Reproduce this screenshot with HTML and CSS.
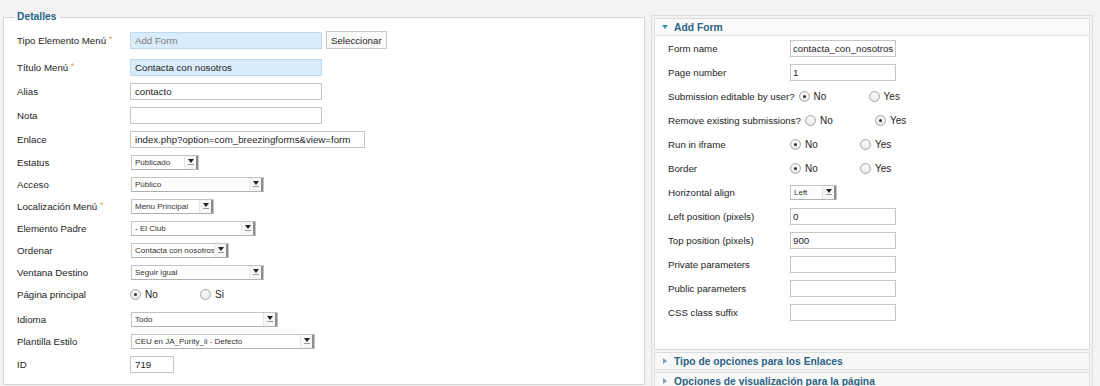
FILE: index.html
```html
<!DOCTYPE html>
<html lang="es">
<head>
    <meta charset="UTF-8">
    <meta name="viewport" content="width=device-width, initial-scale=1.0">
    <title>Editar elemento de menú</title>
    <link rel="stylesheet" href="styles.css">
</head>
<body>
    <div class="page">
        <fieldset class="details">
            <legend>Detalles</legend>
            <div class="row first">
                <label>Tipo Elemento Menú <span class="star">*</span></label>
                <input class="field blue muted" type="text" value="Add Form" readonly>
                <button class="pick">Seleccionar</button>
            </div>
            <div class="row">
                <label>Título Menú <span class="star">*</span></label>
                <input class="field blue" type="text" value="Contacta con nosotros">
            </div>
            <div class="row">
                <label>Alias</label>
                <input class="field" type="text" value="contacto">
            </div>
            <div class="row">
                <label>Nota</label>
                <input class="field" type="text" value="">
            </div>
            <div class="row">
                <label>Enlace</label>
                <input class="field long" type="text" value="index.php?option=com_breezingforms&amp;view=form" readonly>
            </div>
            <div class="row sel">
                <label>Estatus</label>
                <div class="select s-status"><span class="val">Publicado</span><span class="arrow"></span></div>
            </div>
            <div class="row sel">
                <label>Acceso</label>
                <div class="select s-access"><span class="val">Público</span><span class="arrow"></span></div>
            </div>
            <div class="row sel">
                <label>Localización Menú <span class="star">*</span></label>
                <div class="select s-menu"><span class="val">Menu Principal</span><span class="arrow"></span></div>
            </div>
            <div class="row sel">
                <label>Elemento Padre</label>
                <div class="select s-parent"><span class="val">- El Club</span><span class="arrow"></span></div>
            </div>
            <div class="row sel">
                <label>Ordenar</label>
                <div class="select s-order"><span class="val">Contacta con nosotros</span><span class="arrow"></span></div>
            </div>
            <div class="row sel">
                <label>Ventana Destino</label>
                <div class="select s-access"><span class="val">Seguir igual</span><span class="arrow"></span></div>
            </div>
            <div class="row sel radios">
                <label>Página principal</label>
                <span class="radio on"><i></i>No</span>
                <span class="radio"><i></i>Si</span>
            </div>
            <div class="row sel">
                <label>Idioma</label>
                <div class="select s-lang"><span class="val">Todo</span><span class="arrow"></span></div>
            </div>
            <div class="row sel">
                <label>Plantilla Estilo</label>
                <div class="select s-tpl"><span class="val">CEU en JA_Purity_ii - Defecto</span><span class="arrow"></span></div>
            </div>
            <div class="row">
                <label>ID</label>
                <input class="field short" type="text" value="719" readonly>
            </div>
        </fieldset>

        <div class="side">
            <div class="pane open">
                <h3 class="pane-title"><span class="tri"></span>Add Form</h3>
                <div class="pane-body">
                    <div class="row">
                        <label>Form name</label>
                        <input class="field" type="text" value="contacta_con_nosotros">
                    </div>
                    <div class="row">
                        <label>Page number</label>
                        <input class="field" type="text" value="1">
                    </div>
                    <div class="row">
                        <label>Submission editable by user?</label>
                        <span class="radio on"><i></i>No</span>
                        <span class="radio"><i></i>Yes</span>
                    </div>
                    <div class="row">
                        <label>Remove existing submissions?</label>
                        <span class="radio"><i></i>No</span>
                        <span class="radio on"><i></i>Yes</span>
                    </div>
                    <div class="row">
                        <label>Run in iframe</label>
                        <span class="radio on"><i></i>No</span>
                        <span class="radio"><i></i>Yes</span>
                    </div>
                    <div class="row">
                        <label>Border</label>
                        <span class="radio on"><i></i>No</span>
                        <span class="radio"><i></i>Yes</span>
                    </div>
                    <div class="row">
                        <label>Horizontal align</label>
                        <div class="select s-align"><span class="val">Left</span><span class="arrow"></span></div>
                    </div>
                    <div class="row">
                        <label>Left position (pixels)</label>
                        <input class="field" type="text" value="0">
                    </div>
                    <div class="row">
                        <label>Top position (pixels)</label>
                        <input class="field" type="text" value="900">
                    </div>
                    <div class="row">
                        <label>Private parameters</label>
                        <input class="field" type="text" value="">
                    </div>
                    <div class="row">
                        <label>Public parameters</label>
                        <input class="field" type="text" value="">
                    </div>
                    <div class="row">
                        <label>CSS class suffix</label>
                        <input class="field" type="text" value="">
                    </div>
                </div>
            </div>
            <div class="pane">
                <h3 class="pane-title"><span class="tri closed"></span>Tipo de opciones para los Enlaces</h3>
            </div>
            <div class="pane">
                <h3 class="pane-title"><span class="tri closed"></span>Opciones de visualización para la página</h3>
            </div>
        </div>
    </div>
</body>
</html>
```

FILE: styles.css
```css
body {
    margin: 0;
    background-color: #f3f3f3;
    font-family: "Liberation Sans", Arial, sans-serif;
    font-size: 9.7px;
    color: #1e1e1e;
}

.page {
    display: flex;
    align-items: flex-start;
    gap: 6px;
    padding: 10px 0 0 3px;
}

/* left column */
.details {
    width: 642px;
    min-width: 0;
    box-sizing: border-box;
    margin: 0;
    padding: 4px 0 8px 13px;
    border: 1px solid #d6d6d6;
    background-color: #ffffff;
}

.details legend {
    padding: 0 2px;
    margin-left: -2px;
    font-size: 10.3px;
    line-height: 14px;
    font-weight: bold;
    color: #2a6386;
}

.row {
    display: flex;
    align-items: center;
    height: 24px;
}

.row.sel {
    height: 22px;
}

.row.first,
.row.radios {
    margin-bottom: 3px;
}

.row label {
    width: 113px;
    flex: none;
}

.star {
    color: #eba345;
    font-size: 9px;
    position: relative;
    top: -2px;
}

.field {
    box-sizing: border-box;
    width: 192px;
    height: 17px;
    margin: 0;
    padding: 0 4px;
    border: 1px solid #c6c6c6;
    background-color: #ffffff;
    font-family: inherit;
    font-size: 9.7px;
    color: #1e1e1e;
    outline: none;
}

.field.blue {
    background-color: #d9ecfb;
    border-color: #c2d8ea;
}

.field.muted {
    color: #7d7d7d;
}

.field.long {
    width: 235px;
}

.field.short {
    width: 44px;
}

.pick {
    margin-left: 4px;
    height: 18px;
    padding: 0 4px;
    border: 1px solid #c9c9c9;
    background-color: #fafafa;
    font-family: inherit;
    font-size: 9.7px;
    color: #1e1e1e;
}

/* fake selects */
.select {
    display: inline-flex;
    align-items: stretch;
    box-sizing: border-box;
    height: 15px;
    margin-left: 1px;
    border: 1px solid #c4c4c4;
    border-bottom-color: #b0b0b0;
    background-color: #ffffff;
    font-size: 8px;
    color: #333333;
}

.select .val {
    flex: 1;
    padding-left: 3px;
    line-height: 13px;
    white-space: nowrap;
    overflow: hidden;
}

.select .arrow {
    width: 11px;
    flex: none;
    display: flex;
    flex-direction: column;
    align-items: center;
    justify-content: center;
    gap: 1px;
    border-left: 1px solid #e6e6e6;
    border-right: 2px solid #8c8c8c;
    background-color: #f7f7f7;
}

.select .arrow::before {
    content: "";
    border-left: 3px solid transparent;
    border-right: 3px solid transparent;
    border-top: 4px solid #222222;
}

.select .arrow::after {
    content: "";
    width: 6px;
    height: 1px;
    background-color: #9a9a9a;
}

.s-status { width: 68px; }
.s-access { width: 133px; }
.s-menu { width: 83px; }
.s-parent { width: 125px; }
.s-order { width: 98px; }
.s-lang { width: 147px; }
.s-tpl { width: 184px; }
.s-align { width: 47px; margin-left: 0; }

/* radios */
.radio {
    display: inline-flex;
    align-items: center;
    gap: 4px;
    width: 70px;
    flex: none;
    font-size: 10px;
}

.radio i {
    display: flex;
    align-items: center;
    justify-content: center;
    width: 9px;
    height: 9px;
    border: 1px solid #a8a8a8;
    border-radius: 50%;
    background: linear-gradient(#ffffff, #e6e6e6);
    box-shadow: inset 0 1px 1px rgba(0, 0, 0, 0.08);
}

.radio.on i::after {
    content: "";
    width: 3px;
    height: 3px;
    border-radius: 50%;
    background-color: #333333;
}

/* right column */
.side {
    width: 442px;
    box-sizing: border-box;
    margin-top: 5px;
    padding: 2px;
    border: 1px solid #dcdcdc;
    background-color: #f3f3f3;
}

.pane {
    margin-bottom: 2px;
    border: 1px solid #dcdcdc;
    background-color: #ffffff;
}

.pane-title {
    display: flex;
    align-items: center;
    gap: 6px;
    height: 16px;
    margin: 0;
    padding-left: 7px;
    background-color: #f8f8f8;
    font-size: 10.3px;
    font-weight: bold;
    color: #2a6386;
}

.pane.open .pane-title {
    background-color: #fbfbfb;
    border-bottom: 1px solid #e2e2e2;
}

.tri {
    width: 0;
    height: 0;
    border-left: 3px solid transparent;
    border-right: 3px solid transparent;
    border-top: 4px solid #3f8db2;
}

.tri.closed {
    margin-left: 1px;
    margin-right: 1px;
    border-top: 3px solid transparent;
    border-bottom: 3px solid transparent;
    border-left: 4px solid #7f9db2;
    border-right: 0;
}

.pane-body {
    padding: 0 0 25px 13px;
}

.pane-body .row label {
    width: auto;
    min-width: 122px;
    box-sizing: border-box;
    padding-right: 4px;
}

.pane-body .field {
    width: 106px;
    padding: 0 2px;
}
```
